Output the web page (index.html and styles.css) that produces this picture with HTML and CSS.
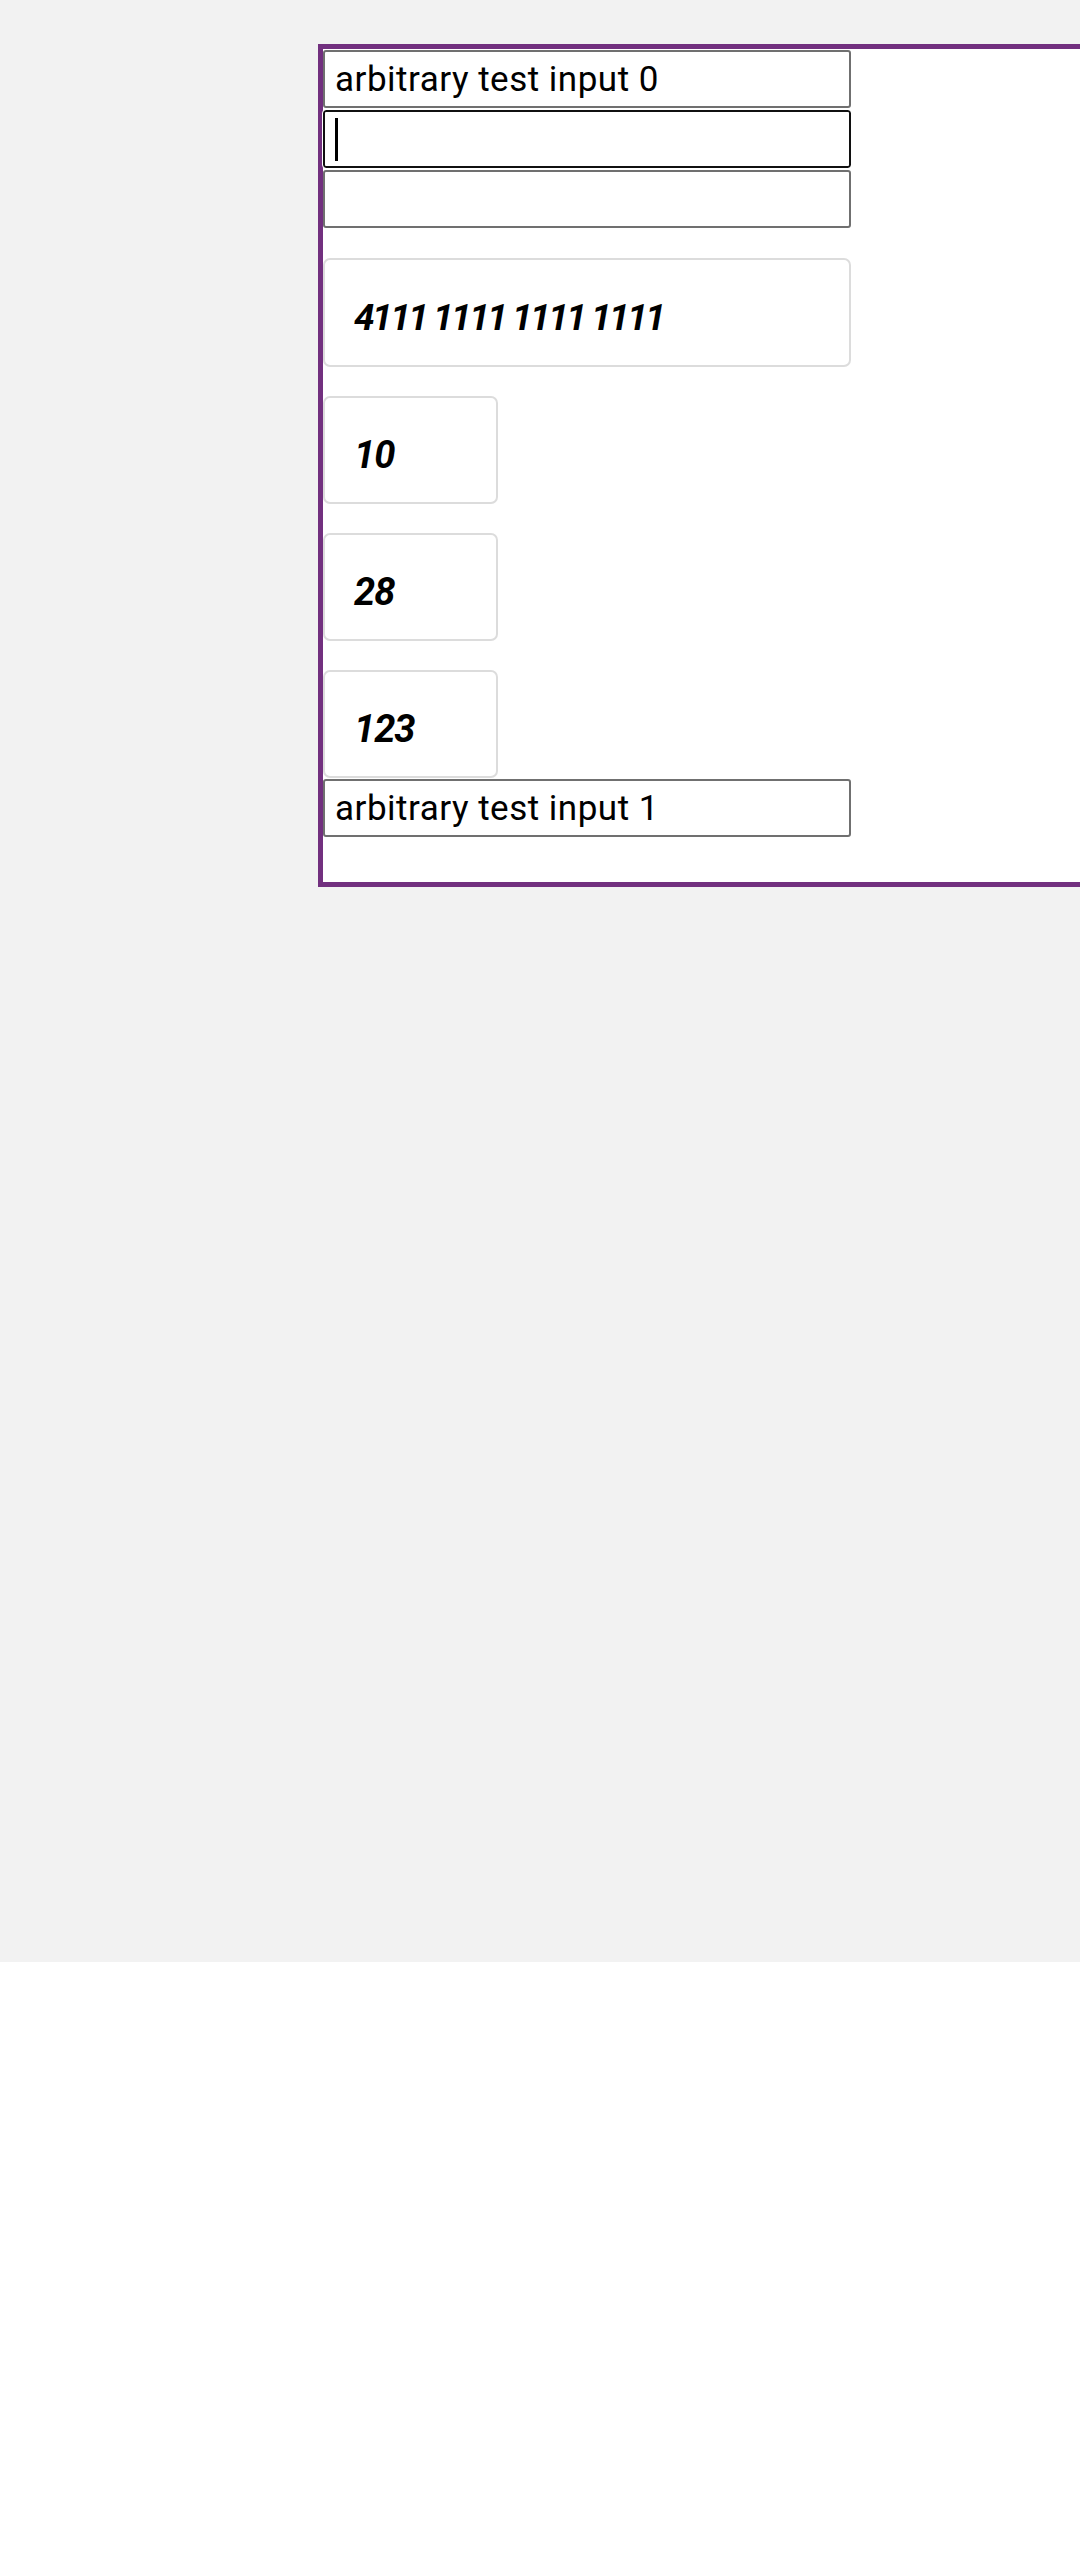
FILE: index.html
```html
<!DOCTYPE html>
<html lang="en">
<head>
<meta charset="utf-8">
<title>Payment form test</title>
<link rel="stylesheet" href="styles.css">
</head>
<body>
<div class="page">
  <form class="frame">
    <input class="field" type="text" value="arbitrary test input 0">
    <div class="focus-wrap">
      <input class="field field--focused" type="text" value="">
      <span class="caret"></span>
    </div>
    <input class="field" type="text" value="">
    <div class="card card--wide"><span class="card-text card-text--number">4111 1111 1111 1111</span></div>
    <div class="card card--small"><span class="card-text">10</span></div>
    <div class="card card--small"><span class="card-text">28</span></div>
    <div class="card card--small card--last"><span class="card-text">123</span></div>
    <input class="field field--last" type="text" value="arbitrary test input 1">
  </form>
</div>
</body>
</html>
```
FILE: styles.css
```css
html {
  background: #ffffff;
}
body {
  margin: 0;
  font-family: Roboto, "Liberation Sans", sans-serif;
}
.page {
  height: 1962px;
  background: #f2f2f2;
  padding: 44px 0 0 318px;
  box-sizing: border-box;
  overflow: hidden;
}
.frame {
  width: 900px;
  box-sizing: border-box;
  background: #ffffff;
  border: 5px solid #72307f;
  padding: 1px 0 45px 0;
  display: flex;
  flex-direction: column;
  align-items: flex-start;
}
.field {
  display: block;
  width: 528px;
  height: 58px;
  box-sizing: border-box;
  margin: 0 0 2px 0;
  border: 2px solid #707070;
  border-radius: 3px;
  padding: 0 0 0 10px;
  font-family: Roboto, "Liberation Sans", sans-serif;
  font-size: 35px;
  letter-spacing: 0.5px;
  color: #000000;
  background: #ffffff;
  outline: none;
}
.field--last {
  margin-bottom: 0;
}
.focus-wrap {
  position: relative;
}
.field--focused {
  border-color: #101010;
  outline: 1px solid #ffffff;
}
.caret {
  position: absolute;
  left: 12px;
  top: 8px;
  width: 3px;
  height: 43px;
  background: #000000;
}
.card {
  box-sizing: border-box;
  height: 108px;
  margin-top: 28px;
  border: 2px solid #dcdcdc;
  border-radius: 7px;
  background: #ffffff;
  display: flex;
  align-items: center;
  padding: 10px 0 0 29px;
}
.card--wide {
  width: 528px;
  height: 109px;
}
.card--small {
  width: 175px;
  margin-top: 29px;
}
.card--last {
  margin-bottom: 1px;
}
.card-text {
  font-family: Roboto, "Liberation Sans", sans-serif;
  font-weight: 700;
  font-style: italic;
  font-size: 38px;
  letter-spacing: -1px;
  color: #000000;
}
.card-text--number {
  font-size: 37px;
  letter-spacing: -2.5px;
}
```
